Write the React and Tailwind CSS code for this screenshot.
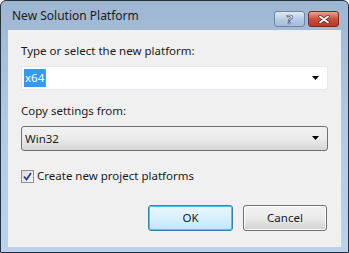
import { useState } from 'react';

function Arrow() {
  return (
    <svg width="8" height="5" viewBox="0 0 8 5" className="shrink-0">
      <path d="M0 0 H7 L3.5 4 Z" fill="#000" />
    </svg>
  );
}

export default function App() {
  const [checked, setChecked] = useState(true);

  return (
    <div
      className="w-[349px] h-[253px] flex flex-col border border-[#27323f] rounded-t-[6px] overflow-hidden bg-gradient-to-b from-[#9db6d2] via-[#b4cae3] to-[#bcd2ea]"
      style={{ fontFamily: '"Noto Sans", "Segoe UI", sans-serif' }}
    >
      {/* title bar */}
      <div className="h-[29px] flex items-start shrink-0">
        <span className="ml-[11px] mt-[7px] text-[12px] leading-[16px] text-[#1b1b1b]">New Solution Platform</span>
        <div className="ml-auto mt-[10px] mr-[9px] flex gap-[3px]">
          <div className="w-[31px] h-[16px] rounded-[3px] border border-[#6d85a3] bg-gradient-to-b from-[#dfe9f5] via-[#b9cde4] to-[#a4bcd9] flex items-center justify-center">
            <span className="text-[13px] leading-none font-bold text-white" style={{ WebkitTextStroke: '0.7px #3e4f66' }}>?</span>
          </div>
          <div className="w-[31px] h-[16px] rounded-[3px] border border-[#7a2a20] bg-gradient-to-b from-[#e8a393] via-[#c8513d] to-[#b33a28] flex items-center justify-center">
            <svg width="12" height="9" viewBox="0 0 12 9">
              <path d="M2 1.5 L10 7.5 M10 1.5 L2 7.5" stroke="#5a1a10" strokeWidth="3.2" strokeLinecap="round" />
              <path d="M2 1.5 L10 7.5 M10 1.5 L2 7.5" stroke="#ffffff" strokeWidth="2" strokeLinecap="round" />
            </svg>
          </div>
        </div>
      </div>

      <div className="flex flex-1">
        <div className="w-[7px] shrink-0" />
        {/* client area */}
        <div className="w-[333px] h-[217px] bg-[#f0f0f0] pl-[13px] pt-[13px] text-[11.5px] text-[#1b1b1b] flex flex-col">
          <div className="leading-[16px]">Type or select the new platform:</div>
          <div className="mt-[7px] w-[307px] h-[24px] bg-white border border-[#e3e9ef] rounded-[2px] flex items-center pl-[2px] pr-[7px]">
            <span className="bg-[#3399ff] text-white leading-[18px] px-[1px]">x64</span>
            <span className="w-[1px] h-[18px] bg-[#e07b2a]" />
            <span className="ml-auto">
              <Arrow />
            </span>
          </div>

          <div className="mt-[13px] leading-[16px]">Copy settings from:</div>
          <div className="mt-[7px] w-[307px] h-[25px] border border-[#707070] rounded-[3px] bg-gradient-to-b from-[#f2f2f2] via-[#ebebeb] to-[#d6d6d6] flex items-center pl-[3px] pr-[7px]">
            <span className="leading-[16px]">Win32</span>
            <span className="ml-auto">
              <Arrow />
            </span>
          </div>

          <label className="mt-[17px] flex items-center gap-[3px] cursor-pointer">
            <span
              onClick={() => setChecked((c) => !c)}
              className="w-[13px] h-[13px] border border-[#8e8f8f] bg-gradient-to-br from-[#dcdcdc] to-[#f8f8f8] flex items-center justify-center"
            >
              {checked && (
                <svg width="9" height="9" viewBox="0 0 9 9">
                  <path d="M1 4.5 L3.5 7.5 L8 1" stroke="#2b3f8c" strokeWidth="1.8" fill="none" />
                </svg>
              )}
            </span>
            <span className="leading-[16px]">Create new project platforms</span>
          </label>

          <div className="mt-[21px] flex">
            <button className="ml-[127px] w-[85px] h-[26px] rounded-[3px] border border-[#3c7fb1] bg-gradient-to-b from-[#eaf6fd] via-[#d9f0fc] to-[#bee6fd] shadow-[inset_0_0_0_1px_#48c4f5] text-[11.5px] text-[#1b1b1b]">
              OK
            </button>
            <button className="ml-[10px] w-[84px] h-[26px] rounded-[3px] border border-[#707070] bg-gradient-to-b from-[#f2f2f2] via-[#ebebeb] to-[#cfcfcf] shadow-[inset_0_0_0_1px_#fcfcfc] text-[11.5px] text-[#1b1b1b]">
              Cancel
            </button>
          </div>
        </div>
      </div>
    </div>
  );
}
